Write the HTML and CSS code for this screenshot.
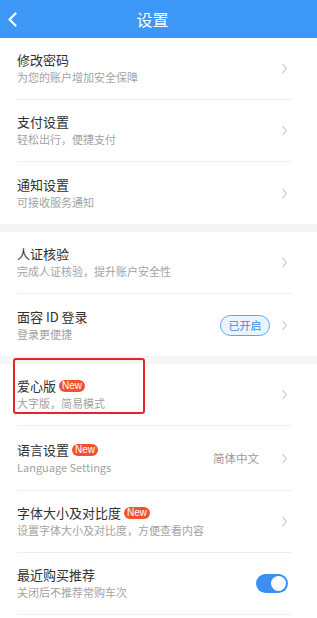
FILE: index.html
```html
<!DOCTYPE html>
<html lang="zh-CN">
<head>
<meta charset="utf-8">
<title>设置</title>
<link rel="stylesheet" href="styles.css">
</head>
<body>
<div class="page">
  <header class="topbar">
    <div class="back">
      <svg width="11" height="15" viewBox="0 0 11 15"><polyline points="8.5,1.5 2.5,7.5 8.5,13.5" fill="none" stroke="#fff" stroke-width="2.2" stroke-linecap="round" stroke-linejoin="round"/></svg>
    </div>
    <div class="title">设置</div>
    <div class="spacer"></div>
  </header>

  <section class="group">
    <div class="row">
      <div class="inner">
        <div class="texts"><div class="t">修改密码</div><div class="s">为您的账户增加安全保障</div></div>
        <svg class="chev" width="7" height="11" viewBox="0 0 7 11"><polyline points="1.5,1 5.5,5.5 1.5,10" fill="none" stroke="#cfcfcf" stroke-width="1.2"/></svg>
      </div>
    </div>
    <div class="row">
      <div class="inner">
        <div class="texts"><div class="t">支付设置</div><div class="s">轻松出行，便捷支付</div></div>
        <svg class="chev" width="7" height="11" viewBox="0 0 7 11"><polyline points="1.5,1 5.5,5.5 1.5,10" fill="none" stroke="#cfcfcf" stroke-width="1.2"/></svg>
      </div>
    </div>
    <div class="row last">
      <div class="inner">
        <div class="texts"><div class="t">通知设置</div><div class="s">可接收服务通知</div></div>
        <svg class="chev" width="7" height="11" viewBox="0 0 7 11"><polyline points="1.5,1 5.5,5.5 1.5,10" fill="none" stroke="#cfcfcf" stroke-width="1.2"/></svg>
      </div>
    </div>
  </section>

  <div class="band"></div>

  <section class="group">
    <div class="row">
      <div class="inner">
        <div class="texts"><div class="t">人证核验</div><div class="s">完成人证核验，提升账户安全性</div></div>
        <svg class="chev" width="7" height="11" viewBox="0 0 7 11"><polyline points="1.5,1 5.5,5.5 1.5,10" fill="none" stroke="#cfcfcf" stroke-width="1.2"/></svg>
      </div>
    </div>
    <div class="row last">
      <div class="inner">
        <div class="texts"><div class="t">面容 ID 登录</div><div class="s">登录更便捷</div></div>
        <span class="pill">已开启</span>
        <svg class="chev" width="7" height="11" viewBox="0 0 7 11"><polyline points="1.5,1 5.5,5.5 1.5,10" fill="none" stroke="#cfcfcf" stroke-width="1.2"/></svg>
      </div>
    </div>
  </section>

  <div class="band"></div>

  <section class="group">
    <div class="row marked">
      <div class="mark"></div>
      <div class="inner">
        <div class="texts"><div class="t">爱心版<span class="new">New</span></div><div class="s">大字版，简易模式</div></div>
        <svg class="chev" width="7" height="11" viewBox="0 0 7 11"><polyline points="1.5,1 5.5,5.5 1.5,10" fill="none" stroke="#cfcfcf" stroke-width="1.2"/></svg>
      </div>
    </div>
    <div class="row tall">
      <div class="inner">
        <div class="texts"><div class="t">语言设置<span class="new">New</span></div><div class="s">Language Settings</div></div>
        <span class="value">简体中文</span>
        <svg class="chev" width="7" height="11" viewBox="0 0 7 11"><polyline points="1.5,1 5.5,5.5 1.5,10" fill="none" stroke="#cfcfcf" stroke-width="1.2"/></svg>
      </div>
    </div>
    <div class="row">
      <div class="inner">
        <div class="texts"><div class="t">字体大小及对比度<span class="new">New</span></div><div class="s">设置字体大小及对比度，方便查看内容</div></div>
        <svg class="chev" width="7" height="11" viewBox="0 0 7 11"><polyline points="1.5,1 5.5,5.5 1.5,10" fill="none" stroke="#cfcfcf" stroke-width="1.2"/></svg>
      </div>
    </div>
    <div class="row">
      <div class="inner">
        <div class="texts"><div class="t">最近购买推荐</div><div class="s">关闭后不推荐常购车次</div></div>
        <span class="toggle"><span class="knob"></span></span>
      </div>
    </div>
  </section>
</div>
</body>
</html>
```

FILE: styles.css
```css
* { box-sizing: border-box; }
html, body { margin: 0; padding: 0; background: #fff; }
body {
  font-family: "Noto Sans CJK SC", "Noto Sans", sans-serif;
  color: #303030;
}
.page { width: 317px; overflow: hidden; }

.topbar {
  height: 38px;
  background: #3c97f7;
  display: flex;
  align-items: center;
}
.back {
  width: 40px;
  padding-left: 7px;
  display: flex;
  align-items: center;
}
.back svg { display: block; }
.title {
  flex: 1;
  text-align: center;
  color: #fff;
  font-size: 16px;
  line-height: 20px;
}
.spacer { width: 52px; }

.band { height: 8px; background: #f5f5f5; }

.row {
  height: 62px;
  padding-left: 17px;
  padding-right: 25px;
}
.row.tall { height: 65px; }
.inner {
  height: 100%;
  display: flex;
  align-items: center;
  border-bottom: 1px solid #efefef;
  padding-right: 4px;
}
.row.last .inner { border-bottom: none; }
.texts {
  flex: 1;
  display: flex;
  flex-direction: column;
  gap: 1px;
  padding-bottom: 1px;
}
.t {
  font-size: 13px;
  line-height: 18px;
  color: #303030;
  display: flex;
  align-items: center;
}
.s {
  font-size: 11px;
  line-height: 15px;
  color: #a3a3a3;
}
.chev { display: block; flex: none; }

.new {
  display: inline-block;
  margin-left: 3px;
  height: 12px;
  line-height: 12px;
  padding: 0 3px;
  border-radius: 6px;
  background: #f1532f;
  color: #fff;
  font-family: "Liberation Sans", Arial, sans-serif;
  font-size: 10px;
}

.pill {
  width: 50px;
  height: 21px;
  border: 1px solid #5aa5f3;
  border-radius: 11px;
  background: #ebf4fe;
  color: #3b8ce4;
  font-size: 11px;
  line-height: 19px;
  text-align: center;
  margin-right: 11px;
}
.value {
  font-size: 11.5px;
  color: #9a9a9a;
  margin-right: 22px;
}

.toggle {
  position: relative;
  width: 32px;
  height: 19px;
  border-radius: 10px;
  background: #3b8ef2;
}
.knob {
  position: absolute;
  right: 2px;
  top: 2px;
  width: 15px;
  height: 15px;
  border-radius: 50%;
  background: #fff;
}

.row.marked { position: relative; }
.mark {
  position: absolute;
  left: 13px;
  top: -6px;
  width: 132px;
  height: 56px;
  border: 2px solid #e8242b;
  border-radius: 3px;
  pointer-events: none;
}
```
